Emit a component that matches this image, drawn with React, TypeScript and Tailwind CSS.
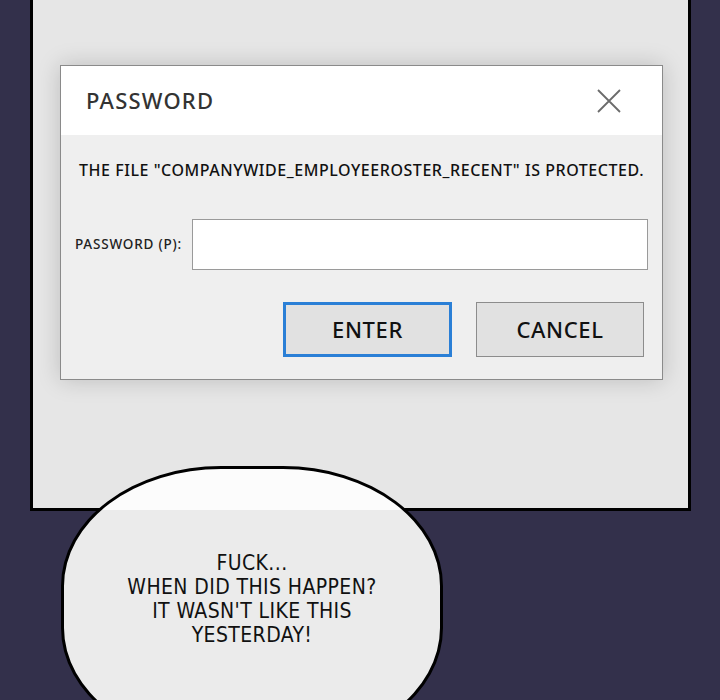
const dialogFont = { fontFamily: '"Noto Sans", "Open Sans", sans-serif' };
const comicFont = { fontFamily: '"Liberation Sans Narrow", "DejaVu Sans Condensed", "Roboto", sans-serif' };

function CloseIcon() {
  return (
    <svg width="26" height="26" viewBox="0 0 26 26" fill="none">
      <path d="M2 2 L24 24 M24 2 L2 24" stroke="#6b6b6b" strokeWidth="1.8" />
    </svg>
  );
}

function PasswordDialog() {
  return (
    <div
      className="w-[603px] border border-[#8a8a8a] bg-[#efefef] shadow-[0_0_22px_rgba(0,0,0,0.18)]"
      style={dialogFont}
    >
      <div className="h-[69px] bg-white flex items-center justify-between pl-[25px] pr-[40px]">
        <span className="text-[22px] font-medium tracking-[1.2px] text-[#333]">PASSWORD</span>
        <CloseIcon />
      </div>

      <div className="pt-[23px] pb-[22px] px-[14px]">
        <p className="text-center text-[16px] font-medium leading-[24px] tracking-[0.55px] text-[#111] whitespace-nowrap">
          THE FILE "COMPANYWIDE_EMPLOYEEROSTER_RECENT" IS PROTECTED.
        </p>

        <div className="mt-[37px] flex items-center gap-[10px]">
          <span className="text-[13.5px] font-medium tracking-[0.8px] text-[#222] whitespace-nowrap">PASSWORD (P):</span>
          <div className="flex-1 h-[51px] bg-white border border-[#9a9a9a]" />
        </div>

        <div className="mt-[32px] flex justify-end gap-[24px] pr-[4px]">
          <button className="w-[169px] h-[55px] bg-[#e1e1e1] border-[3px] border-[#2a7fd6] text-[22px] font-medium tracking-[0.6px] text-[#111]">
            ENTER
          </button>
          <button className="w-[168px] h-[55px] bg-[#e1e1e1] border border-[#8c8c8c] text-[22px] font-medium tracking-[0.6px] text-[#111]">
            CANCEL
          </button>
        </div>
      </div>
    </div>
  );
}

function SpeechBubble() {
  return (
    <div className="absolute left-[61px] top-[466px] w-[382px] h-[282px] rounded-[160px/120px] border-[3px] border-black bg-[linear-gradient(to_bottom,#fcfcfc_0,#fcfcfc_41px,#ebebeb_41px)]">
      <div
        className="flex flex-col items-center pt-[82px] text-[21px] font-medium leading-[24px] text-[#111] tracking-[0.4px]"
        style={comicFont}
      >
        <span>FUCK...</span>
        <span>WHEN DID THIS HAPPEN?</span>
        <span>IT WASN'T LIKE THIS</span>
        <span>YESTERDAY!</span>
      </div>
    </div>
  );
}

export default function App() {
  return (
    <div className="relative w-[720px] h-[700px] overflow-hidden bg-[#33304b]">
      <div className="ml-[30px] w-[661px] h-[511px] border-[3px] border-t-0 border-black bg-[#e6e6e6] pl-[27px] pt-[65px]">
        <PasswordDialog />
      </div>
      <SpeechBubble />
    </div>
  );
}
